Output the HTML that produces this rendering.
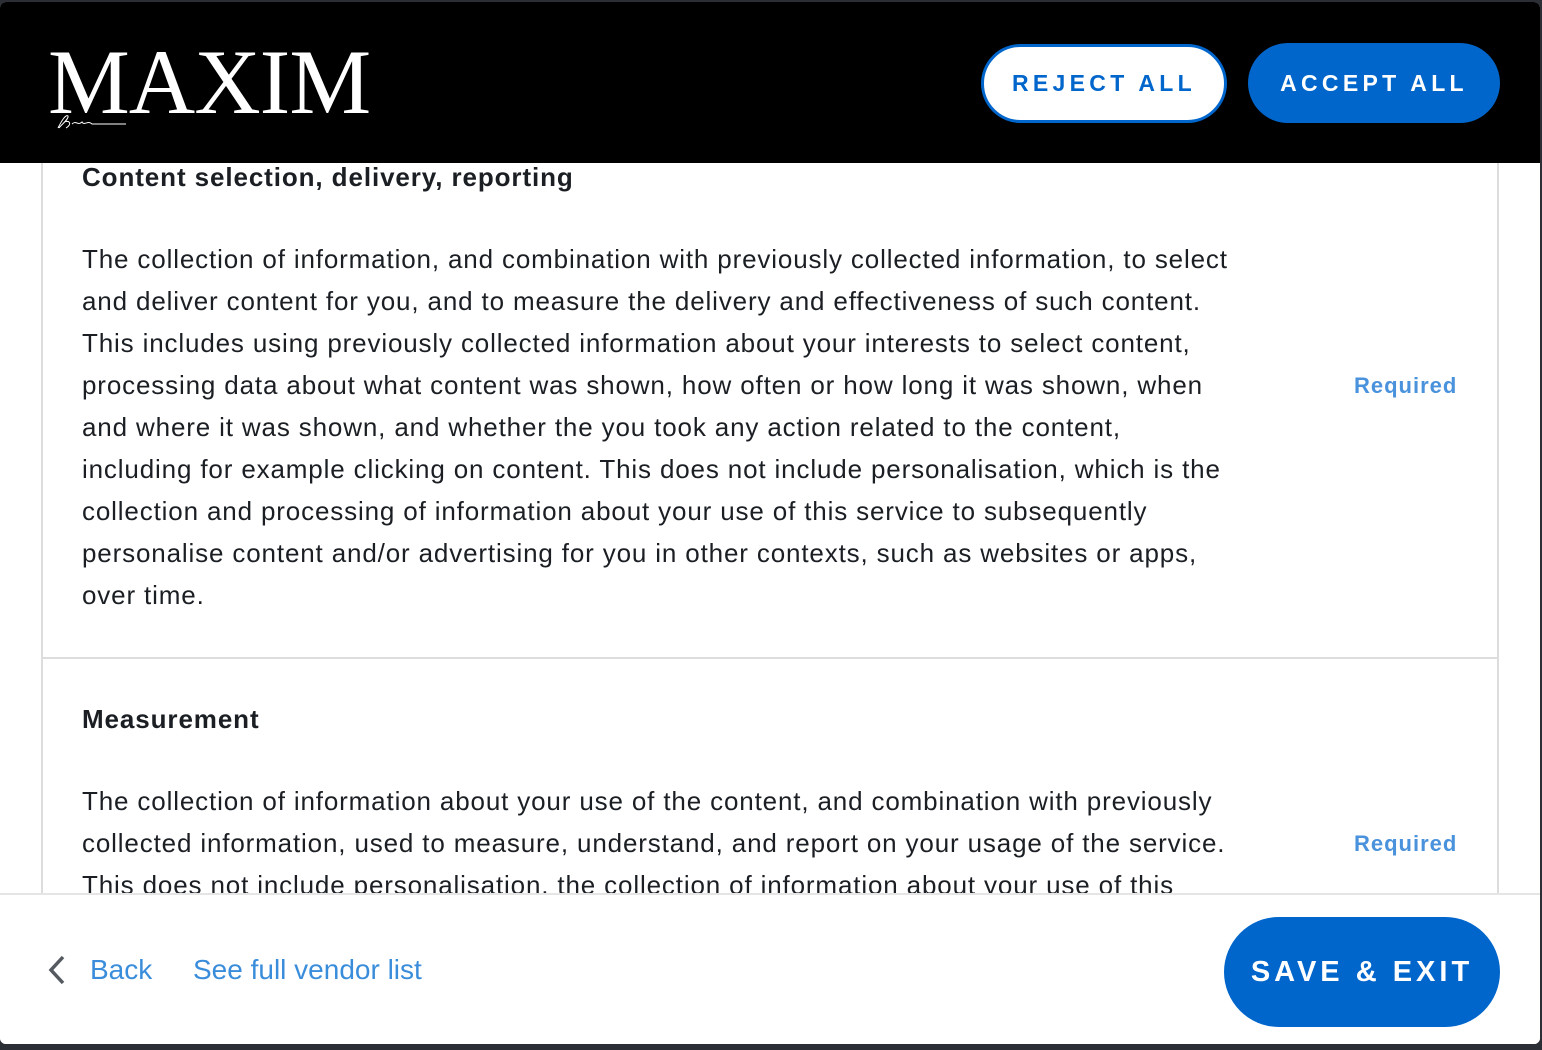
<!DOCTYPE html>
<html><head><style>
*{margin:0;padding:0;box-sizing:border-box}
body{width:1542px;height:1050px;background:#2b2e34;font-family:"Liberation Sans",sans-serif;position:relative;overflow:hidden}
.modal{position:absolute;left:0;top:2px;width:1540px;height:1042px;background:#fff;border-radius:6px;overflow:hidden}
.hdr{position:absolute;left:0;top:0;width:1540px;height:161px;background:#000}
.logo{position:absolute;left:48px;top:30px;color:#fff;font-family:"Liberation Serif",serif;font-size:92px;letter-spacing:-1px;line-height:100px}
.btn{position:absolute;border-radius:40px;font-weight:bold;letter-spacing:4.3px;text-align:center;font-size:23px}
.rej{left:981px;top:42px;width:246px;height:79px;border:3px solid #0066cc;background:#fff;color:#0066cc;line-height:73px}
.acc{left:1248px;top:41px;width:252px;height:80px;background:#0066cc;color:#fff;line-height:80px}
.col{position:absolute;left:41px;top:161px;width:1458px;height:732px;border-left:2px solid #ddd;border-right:2px solid #ddd}
.sep{position:absolute;left:41px;top:655px;width:1458px;height:2px;background:#ddd}
h3{position:absolute;left:82px;font-size:26px;color:#1b1f24;font-weight:bold;letter-spacing:0.9px;white-space:nowrap}
.p{position:absolute;left:82px;font-size:26px;line-height:42px;color:#1b1f24;letter-spacing:0.85px;white-space:nowrap}
.req{position:absolute;left:1354px;font-size:22px;font-weight:bold;color:#4a93dc;letter-spacing:1px}
.foot{position:absolute;left:0;top:891px;width:1540px;height:151px;background:#fff;border-top:2px solid #e5e5e5}
.lnk{position:absolute;top:59px;font-size:28px;color:#3a8ddb}
.save{position:absolute;left:1224px;top:22px;width:276px;height:110px;border-radius:55px;background:#0066cc;color:#fff;font-weight:bold;font-size:29px;letter-spacing:4px;line-height:110px;text-align:center}
</style></head><body>
<div class="modal">
<div class="col"></div>
<div class="sep"></div>
<h3 style="top:160px">Content selection, delivery, reporting</h3>
<div class="p" style="top:236px">The collection of information, and combination with previously collected information, to select<br>and deliver content for you, and to measure the delivery and effectiveness of such content.<br>This includes using previously collected information about your interests to select content,<br>processing data about what content was shown, how often or how long it was shown, when<br>and where it was shown, and whether the you took any action related to the content,<br>including for example clicking on content. This does not include personalisation, which is the<br>collection and processing of information about your use of this service to subsequently<br>personalise content and/or advertising for you in other contexts, such as websites or apps,<br>over time.</div>
<div class="req" style="top:371px">Required</div>
<h3 style="top:702px">Measurement</h3>
<div class="p" style="top:778px">The collection of information about your use of the content, and combination with previously<br>collected information, used to measure, understand, and report on your usage of the service.<br>This does not include personalisation, the collection of information about your use of this</div>
<div class="req" style="top:829px">Required</div>
<div class="hdr">
<div class="logo">MAXIM</div>
<svg style="position:absolute;left:54px;top:108px" width="74" height="22"><path d="M4 18 C8 10 12 4 14 6 C15 9 8 14 5 18 M10 12 C16 10 18 14 12 18 M18 14 C22 10 24 16 28 12 C30 16 34 10 38 14 L72 14" stroke="#fff" stroke-width="1" fill="none"/></svg>
<div class="btn rej">REJECT ALL</div>
<div class="btn acc">ACCEPT ALL</div>
</div>
<div class="foot">
<svg style="position:absolute;left:46px;top:58px" width="22" height="34"><path d="M17 4 L5 17 L17 30" stroke="#555a60" stroke-width="3.5" fill="none"/></svg>
<div class="lnk" style="left:90px">Back</div>
<div class="lnk" style="left:193px">See full vendor list</div>
<div class="save">SAVE &amp; EXIT</div>
</div>
</div>
</body></html>
